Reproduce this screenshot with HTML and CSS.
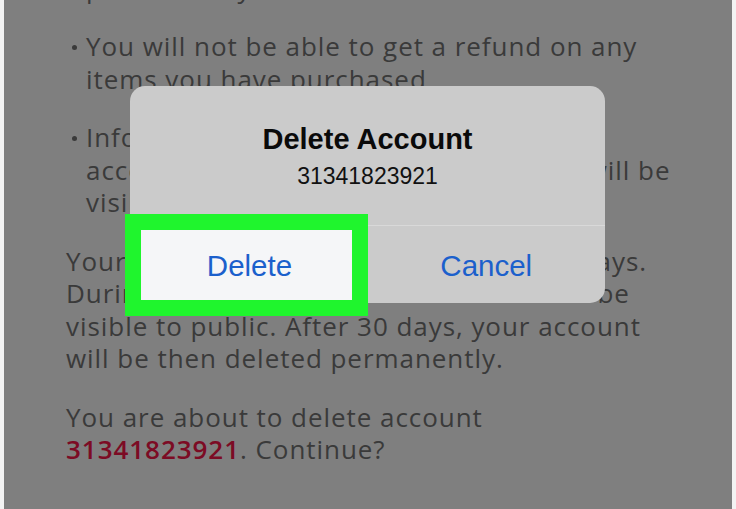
FILE: index.html
```html
<!DOCTYPE html>
<html lang="en">
<head>
<meta charset="utf-8">
<title>Delete Account</title>
<link rel="stylesheet" href="styles.css">
</head>
<body>
<div class="page">
  <div class="panel">
    <div class="content">
      <ul class="bullets">
        <li>Your posts will be removed<br>permanently.</li>
        <li>You will not be able to get a refund on any<br>items you have purchased</li>
        <li>Information on your profile and<br>account such as your posts and pages will be<br>visible to others.</li>
      </ul>
      <p class="para">Your account will be deactivated for 30 days.<br>During this period, your account will not be<br>visible to public. After 30 days, your account<br>will be then deleted permanently.</p>
      <p class="para">You are about to delete account<br><span class="red">31341823921</span>. Continue?</p>
    </div>

    <div class="alert">
      <div class="alert-body">
        <div class="alert-title">Delete Account</div>
        <div class="alert-msg">31341823921</div>
      </div>
      <div class="alert-actions">
        <div class="alert-btn">Delete</div>
        <div class="alert-btn">Cancel</div>
      </div>
    </div>

    <div class="highlight">
      <div class="highlight-inner">Delete</div>
    </div>
  </div>
</div>
</body>
</html>
```

FILE: styles.css
```css
html, body {
  margin: 0;
  padding: 0;
}
body {
  background: #f3f3f3;
  width: 736px;
  height: 509px;
  overflow: hidden;
}
.page {
  display: flex;
  height: 509px;
  padding: 0 4px;
}
.panel {
  position: relative;
  flex: 1;
  background: #7f7f7f;
  overflow: hidden;
}
.content {
  margin-top: -61px;
  padding-left: 62px;
  font-family: "Open Sans", "Lato", sans-serif;
  font-weight: 400;
  font-size: 26px;
  letter-spacing: 0.95px;
  line-height: 32.5px;
  color: #3a3a3a;
  white-space: nowrap;
}
.bullets {
  list-style: none;
  margin: 0;
  padding: 0 0 0 20px;
}
.bullets li {
  position: relative;
  margin: 0 0 26px 0;
}
.bullets li::before {
  content: "";
  position: absolute;
  left: -14px;
  top: 15px;
  width: 5px;
  height: 5px;
  border-radius: 50%;
  background: #3a3a3a;
}
.para {
  margin: 0 0 26px 0;
}
.red {
  color: #7c0b24;
  font-weight: 600;
}
.alert {
  position: absolute;
  left: 126px;
  top: 86px;
  width: 475px;
  height: 217px;
  border-radius: 15px;
  background: #cbcbcb;
  display: flex;
  flex-direction: column;
  font-family: "Liberation Sans", Arial, sans-serif;
  overflow: hidden;
}
.alert-body {
  height: 140px;
  border-bottom: 1px solid #d9d9d9;
  box-sizing: border-box;
  display: flex;
  flex-direction: column;
  align-items: center;
  padding-top: 36px;
}
.alert-title {
  font-weight: 700;
  font-size: 29px;
  line-height: 34px;
  color: #0a0a0a;
}
.alert-msg {
  font-size: 23px;
  line-height: 28px;
  margin-top: 6px;
  color: #111;
}
.alert-actions {
  flex: 1;
  display: grid;
  grid-template-columns: 1fr 1fr;
}
.alert-btn {
  display: flex;
  align-items: center;
  justify-content: center;
  font-size: 29.5px;
  color: #1b60cc;
  padding-top: 2px;
}
.highlight {
  position: absolute;
  left: 121px;
  top: 214px;
  width: 243px;
  height: 102px;
  box-sizing: border-box;
  border: 16px solid #1ff52d;
  background: #1ff52d;
}
.highlight-inner {
  height: 100%;
  background: #f5f6f8;
  display: flex;
  align-items: center;
  justify-content: center;
  padding-left: 6px;
  padding-top: 2px;
  box-sizing: border-box;
  font-family: "Liberation Sans", Arial, sans-serif;
  font-size: 29.5px;
  color: #1b60cc;
}
```
